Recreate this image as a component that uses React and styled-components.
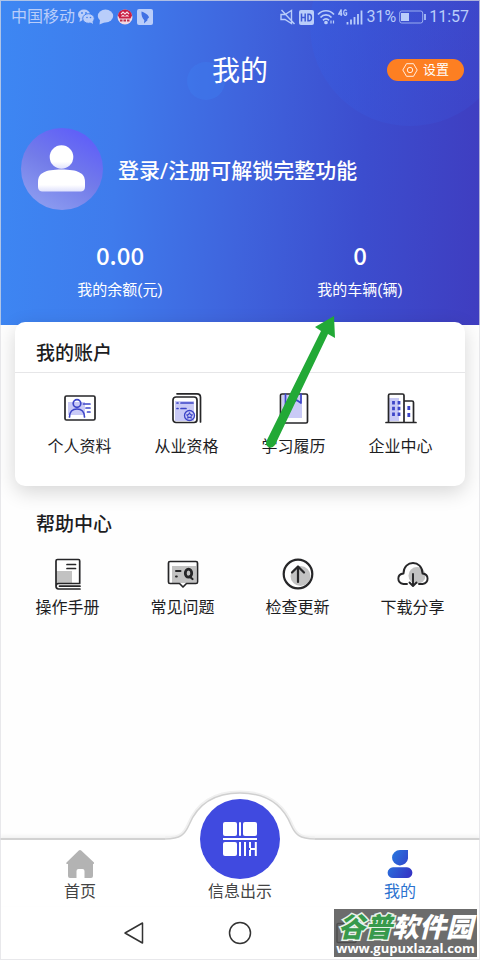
import React from "react";
import styled, { createGlobalStyle } from "styled-components";

const GlobalStyle = createGlobalStyle`
  *, *::before, *::after { box-sizing: border-box; }
  body {
    margin: 0;
    background: #fefefe;
    color: #1d1d1f;
    font-family: "Roboto", "Noto Sans CJK SC", sans-serif;
  }
  button { font: inherit; color: inherit; border: 0; padding: 0; background: none; cursor: pointer; }
  h1, h2, p, dl, dd { margin: 0; }
  svg { display: block; flex: none; }
`;

const Page = styled.div`
  position: relative;
  display: flex;
  flex-direction: column;
  min-height: 100vh;
  overflow: hidden;

  &::after {
    content: "";
    position: absolute;
    inset: 0;
    border: 1px solid rgba(222, 222, 226, 0.7);
    pointer-events: none;
  }
`;

const Hero = styled.header`
  position: relative;
  overflow: hidden;
  padding-bottom: 23px;
  color: #fff;
  background: linear-gradient(93deg, #3d87f3 0%, #3f7bec 25%, #3f64dd 50%, #3c4dce 75%, #3f3dc0 100%);
`;

const Bubble = styled.span`
  position: absolute;
  top: ${(p) => p.$top}px;
  ${(p) => p.$side}: ${(p) => p.$offset};
  width: ${(p) => p.$size}px;
  height: ${(p) => p.$size}px;
  border-radius: 50%;
  background: ${(p) => p.$fill};
`;

const StatusBar = styled.div`
  position: relative;
  display: flex;
  align-items: center;
  justify-content: space-between;
  height: 34px;
  padding: 0 11px;
  font-size: 16px;
  line-height: 20px;
  color: #b9cdfa;
`;

const StatusGroup = styled.div`
  display: flex;
  align-items: center;
  gap: ${(p) => p.$gap}px;
`;

const TitleBar = styled.div`
  position: relative;
  display: grid;
  grid-template-columns: 1fr auto 1fr;
  align-items: center;
  height: 72px;
  padding: 0 16px;
`;

const Title = styled.h1`
  grid-column: 2;
  padding-top: 4px;
  font-size: 28px;
  line-height: 40px;
  font-weight: 400;
`;

const SettingsButton = styled.button`
  justify-self: end;
  display: flex;
  align-items: center;
  justify-content: center;
  gap: 5px;
  width: 77px;
  height: 22px;
  border-radius: 11px;
  background: #fd7f22;
  color: #fff;
  font-size: 13px;
  line-height: 20px;
`;

const Profile = styled.button`
  position: relative;
  display: flex;
  align-items: center;
  gap: 15px;
  margin: 22px 21px 0;
  text-align: left;
  font-size: 21px;
  line-height: 30px;
  font-weight: 500;
`;

const ProfileText = styled.span`
  padding-top: 4px;
`;

const Stats = styled.dl`
  position: relative;
  display: grid;
  grid-template-columns: 1fr 1fr;
  margin-top: 30px;
`;

const Stat = styled.div`
  display: flex;
  flex-direction: column-reverse;
  align-items: center;
  gap: 8px;
`;

const StatLabel = styled.dt`
  font-size: 15px;
  line-height: 24px;
`;

const StatValue = styled.dd`
  font-family: "Noto Sans CJK SC", sans-serif;
  font-size: 24px;
  line-height: 30px;
  font-weight: 500;
`;

const Card = styled.section`
  position: relative;
  margin: -3px 15px 0;
  padding-bottom: 27px;
  border-radius: 10px;
  background: #fff;
  box-shadow: 0 6px 20px rgba(0, 0, 0, 0.16);
`;

const CardHead = styled.div`
  padding: 17px 21px 3px;
  border-bottom: 1px solid #e6e6e8;
`;

const SectionTitle = styled.h2`
  font-size: 19px;
  line-height: 30px;
  font-weight: 500;
`;

const Help = styled.section`
  padding: 24px 10px 0;
`;

const HelpHead = styled.div`
  padding: 0 26px;
`;

const Grid = styled.div`
  display: grid;
  grid-template-columns: repeat(4, 1fr);
  padding: ${(p) => p.$pad};
`;

const GridItem = styled.button`
  display: flex;
  flex-direction: column;
  align-items: center;
  gap: ${(p) => p.$gap}px;
  font-size: 16px;
  line-height: 24px;
  white-space: nowrap;
`;

const Footer = styled.footer`
  position: relative;
  margin-top: auto;
`;

const TabBar = styled.nav`
  position: relative;
  display: grid;
  grid-template-columns: repeat(3, 1fr);
  align-items: end;
  padding-bottom: 3px;
  border-top: 2px solid #d2d2d2;
  background: #fff;
  box-shadow: 0 -2px 4px rgba(0, 0, 0, 0.06);
`;

const Hump = styled.svg`
  position: absolute;
  left: 50%;
  bottom: 100%;
  margin: 0 0 -4px -75px;
`;

const Tab = styled.button`
  position: relative;
  display: flex;
  flex-direction: column;
  align-items: center;
  gap: 2px;
  font-size: 16px;
  line-height: 22px;
  color: ${(p) => (p.$active ? "#2c72cf" : "#444")};
`;

const ScanBadge = styled.span`
  display: grid;
  place-items: center;
  width: 80px;
  height: 80px;
  margin-top: -41px;
  border-radius: 50%;
  background: #404ae0;
`;

const SystemNav = styled.div`
  display: grid;
  grid-template-columns: 1fr auto 1fr;
  align-items: center;
  gap: 82px;
  height: 54px;
  background: #fff;
`;

const SystemButton = styled.button`
  justify-self: ${(p) => p.$align || "center"};
`;

const Watermark = styled.a`
  position: absolute;
  right: 3px;
  bottom: 3px;
  display: flex;
  flex-direction: column;
  align-items: center;
  width: 143px;
  height: 48px;
  padding-top: 2px;
  background: rgba(82, 82, 82, 0.85);
  color: #fff;
  text-decoration: none;
  white-space: nowrap;
`;

const WatermarkName = styled.span`
  font-family: "Noto Sans CJK SC", sans-serif;
  font-size: 27px;
  line-height: 29px;
  font-weight: 900;
  font-style: italic;
`;

const WatermarkAccent = styled.span`
  color: #379a4b;
  -webkit-text-stroke: 3px #e9f3ea;
  paint-order: stroke fill;
`;

const WatermarkUrl = styled.span`
  font-family: "Open Sans", sans-serif;
  font-size: 13px;
  line-height: 16px;
  font-weight: 700;
`;

const Arrow = styled.svg`
  position: absolute;
  left: 50%;
  top: -8px;
  margin-left: 25px;
  pointer-events: none;
`;

const INK = "#262628";
const BLUE = "#3d45c8";
const TINT = "#c9caf6";
const GREY = "#c2c2c2";

const CarrierIcons = () => (
  <svg width="77" height="18" viewBox="0 0 77 18" fill="#b9cdfa" aria-hidden="true">
    <ellipse cx="6" cy="6.500" rx="6" ry="5" />
    <path d="M2 10l-.5 4 4-2.500z" />
    <ellipse cx="10.500" cy="10.500" rx="5.800" ry="4.800" stroke="#3f7fef" />
    <path d="M12 14l3 2-.5-3z" />
    <g fill="#3f7fef"><circle cx="4" cy="5" r=".9" /><circle cx="8" cy="5" r=".9" /><circle cx="9" cy="9.500" r=".8" /><circle cx="12.500" cy="9.500" r=".8" /></g>
    <ellipse cx="27.500" cy="8" rx="7.700" ry="6.500" />
    <path d="M22 12l-.5 4.500 6-2.500z" />
    <circle cx="47" cy="9" r="7.500" fill="#f3d8e2" />
    <path d="M40 7.500a7 6 0 0 1 14 0l-1.500 3h-11z" fill="#c91e43" />
    <path d="M43 6l2-2 2 2 2-2 2 2M43.500 8.500l1.500-1 1.500 1M47.500 8.500l1.500-1 1.500 1" stroke="#f8dfe7" strokeWidth="1.100" fill="none" />
    <path d="M42 12.500h10" stroke="#b9304e" strokeWidth="2" strokeDasharray="2.500 1" />
    <rect x="59" y="1" width="16" height="16" rx="2" />
    <path d="M63.500 3.500c4 1.500 7.500 4 7.500 6l-1.800 1.800.5.700L66 15.500l.3-3.200c-2-2-3.200-5.300-2.800-8.800z" fill="#3f70e4" />
  </svg>
);

const MuteIcon = () => (
  <svg width="16" height="16" viewBox="0 0 16 16" fill="none" stroke="#b9cdfa" strokeWidth="1.400" aria-hidden="true">
    <path d="M1 5.500h4L11.500 1.500v13L5 10.500H1zM1.500 1l13 14" />
  </svg>
);

const HdIcon = () => (
  <svg width="15" height="15" viewBox="0 0 15 15" aria-hidden="true">
    <rect width="15" height="15" rx="2" fill="#b9cdfa" />
    <path d="M2.500 3.500v8M6.200 3.500v8M2.500 7.500h3.700M9 4.200h1.200c3 0 3 6.600 0 6.600H9z" stroke="#3c58d4" strokeWidth="1.500" fill="none" />
  </svg>
);

const WifiIcon = () => (
  <svg width="18" height="16" viewBox="0 0 18 16" fill="none" stroke="#b9cdfa" strokeWidth="1.700" aria-hidden="true">
    <path d="M1 5.500c4.500-5 11.500-5 16 0M3.500 8.500c3-3.500 8-3.500 11 0M6 11.300c1.700-1.800 4.300-1.800 6 0" />
    <circle cx="9" cy="13.500" r="1" fill="#b9cdfa" />
    <path d="M14 11.500v3M16.500 11.500v3" strokeWidth="1.200" />
  </svg>
);

const SignalIcon = () => (
  <svg width="25" height="18" viewBox="0 0 25 18" fill="none" stroke="#b9cdfa" aria-hidden="true">
    <path d="M3.200 8V1.500L.8 6h3.500M8.500 2.800C7.500 1 5.700 1.800 5.700 4.500S7.500 8.300 8.600 6.500V4.800H7.300" strokeWidth="1.300" />
    <path d="M9.500 14v2.500M13 11.500v5M16.500 9v7.500M20 6v10.500M23.500 2.500v14" strokeWidth="1.800" />
  </svg>
);

const BatteryIcon = () => (
  <svg width="27" height="14" viewBox="0 0 27 14" aria-hidden="true">
    <rect x=".7" y="1" width="23" height="12" rx="2" fill="none" stroke="#b9cdfa" strokeOpacity=".75" />
    <rect x="2" y="3" width="8" height="8" fill="#b9cdfa" />
    <path d="M26 4v6" stroke="#b9cdfa" strokeWidth="1.600" />
  </svg>
);

const HexIcon = () => (
  <svg width="16" height="14" viewBox="0 0 16 14" fill="none" stroke="#fff" strokeOpacity=".85" aria-hidden="true">
    <path d="M4.500.7h7L15.200 7l-3.700 6.300h-7L.8 7z" strokeLinejoin="round" />
    <circle cx="8" cy="7" r="2.700" />
  </svg>
);

const Avatar = () => (
  <svg width="82" height="82" viewBox="0 0 82 82" aria-hidden="true">
    <defs>
      <linearGradient id="avatarBg" x1=".8" y1=".1" x2=".3" y2="1">
        <stop offset="0" stopColor="#6060f8" /><stop offset=".5" stopColor="#737ce9" /><stop offset="1" stopColor="#8c9cf0" />
      </linearGradient>
      <linearGradient id="avatarFg" x1="0" y1="0" x2="0" y2="1">
        <stop offset=".7" stopColor="#fff" /><stop offset="1" stopColor="#dfe1fc" />
      </linearGradient>
    </defs>
    <circle cx="41" cy="41" r="41" fill="url(#avatarBg)" />
    <circle cx="40.500" cy="29" r="11.800" fill="url(#avatarFg)" />
    <path d="M17 54c0-9 7-12.500 23.500-12.500S64 45 64 54v4.500c0 4-2 5-5 5H22c-3 0-5-1-5-5z" fill="url(#avatarFg)" />
  </svg>
);

const line = { fill: "none", strokeLinecap: "round", strokeLinejoin: "round", strokeWidth: 1.7 };

const ProfileIcon = () => (
  <svg width="32" height="32" viewBox="0 0 32 32" {...line} aria-hidden="true">
    <rect x="4" y="10" width="17" height="13" fill={TINT} />
    <rect x="1" y="4" width="30" height="24" rx="1.500" stroke={INK} />
    <g stroke={BLUE}><circle cx="13" cy="11.500" r="3.800" /><path d="M5.500 25c0-5 3-8 7.500-8s7.500 3 7.500 8M19.500 12H26M22 16h4M23.500 20H26" /></g>
  </svg>
);

const CertificateIcon = () => (
  <svg width="32" height="32" viewBox="0 0 32 32" {...line} aria-hidden="true">
    <rect x="4" y="9" width="19" height="20" fill={TINT} />
    <rect x="2" y="5" width="24" height="25.500" rx="3" stroke={INK} />
    <path d="M6 1.800h20q3.500 0 3.500 3.500V30" stroke={INK} />
    <g stroke={BLUE}><path d="M6 11h1M10 11h12M6 16.500h1M10 16.500h5" /><circle cx="18.500" cy="23.500" r="5" fill={TINT} strokeWidth="1.300" /><path d="M18.500 20.800l.9 1.700 1.900.3-1.300 1.400.3 1.900-1.800-.8-1.800.8.300-1.900-1.300-1.400 1.900-.3z" strokeWidth="1.100" /></g>
  </svg>
);

const StudyIcon = () => (
  <svg width="32" height="32" viewBox="0 0 32 32" {...line} aria-hidden="true">
    <path d="M4 3h20v23H4z" fill={TINT} />
    <rect x="2.500" y="2" width="27" height="29" rx="1.500" stroke={INK} />
    <path d="M7.500 2v25M14 2v9l4.500-3 4.500 3V2" stroke={BLUE} />
  </svg>
);

const CompanyIcon = () => (
  <svg width="32" height="32" viewBox="0 0 32 32" {...line} aria-hidden="true">
    <path d="M4 6h10v23H4z" fill={TINT} />
    <path d="M3.500 30V3.500Q3.500 2 5 2h12.500Q19 2 19 3.500V30M19 9h8q1.500 0 1.500 1.500V30M1 30.500h30" stroke={INK} />
    <path d="M8.500 9v3.500M14 9v3.500M8.500 14.700v3.500M14 14.700v3.500M8.500 20.400v3.500M14 20.400v3.500M23.800 14v4M23.800 21v4" stroke={BLUE} strokeWidth="2.800" strokeLinecap="butt" />
  </svg>
);

const ManualIcon = () => (
  <svg width="32" height="32" viewBox="0 0 32 32" {...line} aria-hidden="true">
    <path d="M4 13h16v12H4z" fill={GREY} />
    <path d="M4 28V3Q4 1.500 5.500 1.500h21q1.200 0 1.200 1.500v22.500H6.500Q4 25.700 4 28.200T6.500 31H28M7.500 28.200H28M15 6.500h8.500M15 10.500h8.500" stroke={INK} />
  </svg>
);

const QuestionIcon = () => (
  <svg width="32" height="32" viewBox="0 0 32 32" {...line} aria-hidden="true">
    <path d="M5 8h24v17H5z" fill={GREY} />
    <path d="M3 3.500h26q1.500 0 1.500 1.500v19q0 1.500-1.500 1.500H19.500L16 29l-3.500-3.500H3q-1.500 0-1.500-1.500V5Q1.500 3.500 3 3.500z" stroke={INK} />
    <path d="M9 13h4.500M9 18.500h.8" stroke={INK} strokeWidth="2" />
    <ellipse cx="21.500" cy="15.200" rx="3.200" ry="4" stroke={INK} strokeWidth="2.800" /><path d="M22.500 18.500l3 2.500" stroke={INK} strokeWidth="2.200" />
  </svg>
);

const UpdateIcon = () => (
  <svg width="32" height="32" viewBox="0 0 32 32" {...line} strokeWidth="2.200" aria-hidden="true">
    <circle cx="18.500" cy="18" r="10" fill={GREY} />
    <circle cx="16" cy="16" r="14.300" stroke={INK} />
    <path d="M16 24V8.500M10 14.500l6-6 6 6" stroke={INK} />
  </svg>
);

const CloudIcon = () => (
  <svg width="32" height="32" viewBox="0 0 32 32" {...line} strokeWidth="1.900" aria-hidden="true">
    <circle cx="20" cy="17.500" r="8.500" fill={GREY} />
    <path d="M10 26H6.500C-.5 25-.3 16 6.500 15.500 6.500 1.500 25.500 1.500 25.500 15.500c6.500.5 7 9.500 0 10.500H22M16 16v11.500M12.500 24.500L16 28l3.500-3.500" stroke={INK} />
  </svg>
);

const HomeIcon = () => (
  <svg width="30" height="30" viewBox="0 0 30 30" fill="#b3b3b3" aria-hidden="true">
    <path d="M13.800 1.500q1.200-1 2.400 0L29 13.500q.5 1.500-1 1.500v12q0 2-2 2h-6.500v-7q0-2-2-2h-4q-2 0-2 2v7H5q-2 0-2-2V15q-2.500 0-1.500-1.500z" />
  </svg>
);

const CodeIcon = () => (
  <svg width="34" height="34" viewBox="0 0 34 34" fill="#fff" aria-hidden="true">
    <rect width="14" height="14" rx="2" />
    <rect x="16" width="2" height="14" rx="1" />
    <rect x="20" width="14" height="14" rx="2" />
    <rect y="16" width="34" height="2" />
    <rect y="20" width="14" height="14" rx="2" />
    <path d="M17 20v14M22 20v14M27 20v6M27 28v6M32.800 20v14M27 27h6" stroke="#fff" strokeWidth="2" />
  </svg>
);

const MeIcon = () => (
  <svg width="30" height="30" viewBox="0 0 30 30" fill="url(#meFill)" aria-hidden="true">
    <defs><linearGradient id="meFill" x1="2" y1="10" x2="28" y2="24" gradientUnits="userSpaceOnUse"><stop stopColor="#2879df" /><stop offset="1" stopColor="#3532c4" /></linearGradient></defs>
    <path d="M15 1h8v8.500A8 7.700 0 1 1 15 1zM8 18.300h14a5.400 5.400 0 0 1 0 10.800h-14a5.400 5.400 0 0 1 0-10.800z" />
  </svg>
);

const accountItems = [
  ["个人资料", ProfileIcon],
  ["从业资格", CertificateIcon],
  ["学习履历", StudyIcon],
  ["企业中心", CompanyIcon],
];

const helpItems = [
  ["操作手册", ManualIcon],
  ["常见问题", QuestionIcon],
  ["检查更新", UpdateIcon],
  ["下载分享", CloudIcon],
];

export default function App() {
  return (
    <Page>
      <GlobalStyle />
      <Hero>
        <Bubble $top={-74} $side="right" $offset="-30px" $size={200} $fill="linear-gradient(120deg, rgba(54,96,228,.5), rgba(62,74,208,.3))" />
        <Bubble $top={62} $side="left" $offset="39%" $size={38} $fill="rgba(62,126,240,.4)" />
        <StatusBar>
          <StatusGroup $gap={3}>
            <span>中国移动</span>
            <CarrierIcons />
          </StatusGroup>
          <StatusGroup $gap={3}>
            <MuteIcon />
            <HdIcon />
            <WifiIcon />
            <SignalIcon />
            <span>31%</span>
            <BatteryIcon />
            <span>11:57</span>
          </StatusGroup>
        </StatusBar>
        <TitleBar>
          <Title>我的</Title>
          <SettingsButton><HexIcon />设置</SettingsButton>
        </TitleBar>
        <Profile>
          <Avatar />
          <ProfileText>登录/注册可解锁完整功能</ProfileText>
        </Profile>
        <Stats>
          <Stat><StatLabel>我的余额(元)</StatLabel><StatValue>0.00</StatValue></Stat>
          <Stat><StatLabel>我的车辆(辆)</StatLabel><StatValue>0</StatValue></Stat>
        </Stats>
      </Hero>

      <Card>
        <CardHead><SectionTitle>我的账户</SectionTitle></CardHead>
        <Grid $pad="19px 11px 0">
          {accountItems.map(([label, Icon]) => (
            <GridItem key={label} $gap={11}><Icon />{label}</GridItem>
          ))}
        </Grid>
        <Arrow width="72" height="136" viewBox="0 0 72 136" fill="#22a936" aria-hidden="true">
          <path d="M69 2l1 22-7-4L10 131q-4 5-8 1-2-3 0-6L56 17l-6-4z" />
        </Arrow>
      </Card>

      <Help>
        <HelpHead><SectionTitle>帮助中心</SectionTitle></HelpHead>
        <Grid $pad="18px 0 0">
          {helpItems.map(([label, Icon]) => (
            <GridItem key={label} $gap={6}><Icon />{label}</GridItem>
          ))}
        </Grid>
      </Help>

      <Footer>
        <TabBar>
          <Hump width="150" height="54" viewBox="0 0 150 54" fill="#fff" aria-hidden="true">
            <path d="M0 49c16 0 20-5 24-14C33 13 51 3 75 3s42 10 51 32c4 9 8 14 24 14v5H0z" />
            <path d="M0 49c16 0 20-5 24-14C33 13 51 3 75 3s42 10 51 32c4 9 8 14 24 14" fill="none" stroke="#f0f0f0" strokeWidth="5" />
            <path d="M0 49c16 0 20-5 24-14C33 13 51 3 75 3s42 10 51 32c4 9 8 14 24 14v5H0z" />
            <path d="M0 49c16 0 20-5 24-14C33 13 51 3 75 3s42 10 51 32c4 9 8 14 24 14" fill="none" stroke="#d0d0d0" strokeWidth="1.500" />
          </Hump>
          <Tab><HomeIcon />首页</Tab>
          <Tab><ScanBadge><CodeIcon /></ScanBadge>信息出示</Tab>
          <Tab $active aria-current="page"><MeIcon />我的</Tab>
        </TabBar>
        <SystemNav>
          <SystemButton $align="end" aria-label="返回">
            <svg width="24" height="24" viewBox="0 0 24 24" fill="none" stroke="#333" strokeWidth="1.500" strokeLinejoin="round"><path d="M20.500 2v20L3 12z" /></svg>
          </SystemButton>
          <SystemButton aria-label="主屏幕">
            <svg width="24" height="24" viewBox="0 0 24 24" fill="none" stroke="#333" strokeWidth="1.500"><circle cx="12" cy="12" r="10.500" /></svg>
          </SystemButton>
          <SystemButton $align="start" aria-label="最近任务">
            <svg width="24" height="24" viewBox="0 0 24 24" fill="none" stroke="#333" strokeWidth="1.500"><rect x="3" y="2.500" width="19" height="19" rx="1" /></svg>
          </SystemButton>
        </SystemNav>
        <Watermark href="#">
          <WatermarkName><WatermarkAccent>谷普</WatermarkAccent>软件园</WatermarkName>
          <WatermarkUrl>www.gupuxlazal.com</WatermarkUrl>
        </Watermark>
      </Footer>
    </Page>
  );
}
